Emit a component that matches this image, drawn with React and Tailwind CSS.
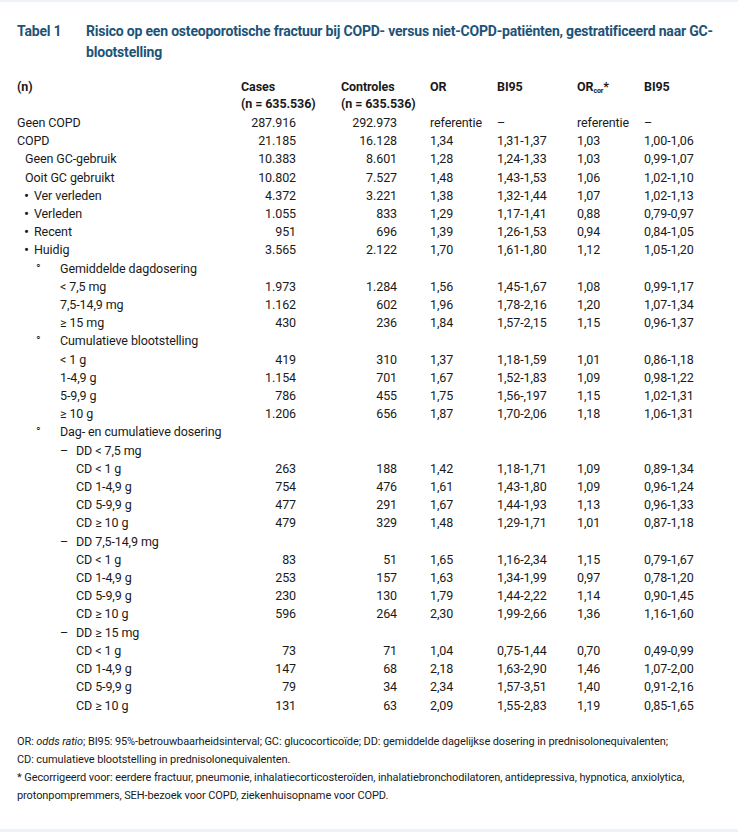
const rows = [
  { k: 'l0', t: 'Geen COPD', v: ['287.916', '292.973', 'referentie', '–', 'referentie', '–'] },
  { k: 'l0', t: 'COPD', v: ['21.185', '16.128', '1,34', '1,31-1,37', '1,03', '1,00-1,06'] },
  { k: 'l1', t: 'Geen GC-gebruik', v: ['10.383', '8.601', '1,28', '1,24-1,33', '1,03', '0,99-1,07'] },
  { k: 'l1', t: 'Ooit GC gebruikt', v: ['10.802', '7.527', '1,48', '1,43-1,53', '1,06', '1,02-1,10'] },
  { k: 'bullet', t: 'Ver verleden', v: ['4.372', '3.221', '1,38', '1,32-1,44', '1,07', '1,02-1,13'] },
  { k: 'bullet', t: 'Verleden', v: ['1.055', '833', '1,29', '1,17-1,41', '0,88', '0,79-0,97'] },
  { k: 'bullet', t: 'Recent', v: ['951', '696', '1,39', '1,26-1,53', '0,94', '0,84-1,05'] },
  { k: 'bullet', t: 'Huidig', v: ['3.565', '2.122', '1,70', '1,61-1,80', '1,12', '1,05-1,20'] },
  { k: 'deg', t: 'Gemiddelde dagdosering' },
  { k: 'l3', t: '< 7,5 mg', v: ['1.973', '1.284', '1,56', '1,45-1,67', '1,08', '0,99-1,17'] },
  { k: 'l3', t: '7,5-14,9 mg', v: ['1.162', '602', '1,96', '1,78-2,16', '1,20', '1,07-1,34'] },
  { k: 'l3', t: '≥ 15 mg', v: ['430', '236', '1,84', '1,57-2,15', '1,15', '0,96-1,37'] },
  { k: 'deg', t: 'Cumulatieve blootstelling' },
  { k: 'l3', t: '< 1 g', v: ['419', '310', '1,37', '1,18-1,59', '1,01', '0,86-1,18'] },
  { k: 'l3', t: '1-4,9 g', v: ['1.154', '701', '1,67', '1,52-1,83', '1,09', '0,98-1,22'] },
  { k: 'l3', t: '5-9,9 g', v: ['786', '455', '1,75', '1,56-,197', '1,15', '1,02-1,31'] },
  { k: 'l3', t: '≥ 10 g', v: ['1.206', '656', '1,87', '1,70-2,06', '1,18', '1,06-1,31'] },
  { k: 'deg', t: 'Dag- en cumulatieve dosering' },
  { k: 'dash', t: 'DD < 7,5 mg' },
  { k: 'l4', t: 'CD < 1 g', v: ['263', '188', '1,42', '1,18-1,71', '1,09', '0,89-1,34'] },
  { k: 'l4', t: 'CD 1-4,9 g', v: ['754', '476', '1,61', '1,43-1,80', '1,09', '0,96-1,24'] },
  { k: 'l4', t: 'CD 5-9,9 g', v: ['477', '291', '1,67', '1,44-1,93', '1,13', '0,96-1,33'] },
  { k: 'l4', t: 'CD ≥ 10 g', v: ['479', '329', '1,48', '1,29-1,71', '1,01', '0,87-1,18'] },
  { k: 'dash', t: 'DD 7,5-14,9 mg' },
  { k: 'l4', t: 'CD < 1 g', v: ['83', '51', '1,65', '1,16-2,34', '1,15', '0,79-1,67'] },
  { k: 'l4', t: 'CD 1-4,9 g', v: ['253', '157', '1,63', '1,34-1,99', '0,97', '0,78-1,20'] },
  { k: 'l4', t: 'CD 5-9,9 g', v: ['230', '130', '1,79', '1,44-2,22', '1,14', '0,90-1,45'] },
  { k: 'l4', t: 'CD ≥ 10 g', v: ['596', '264', '2,30', '1,99-2,66', '1,36', '1,16-1,60'] },
  { k: 'dash', t: 'DD ≥ 15 mg' },
  { k: 'l4', t: 'CD < 1 g', v: ['73', '71', '1,04', '0,75-1,44', '0,70', '0,49-0,99'] },
  { k: 'l4', t: 'CD 1-4,9 g', v: ['147', '68', '2,18', '1,63-2,90', '1,46', '1,07-2,00'] },
  { k: 'l4', t: 'CD 5-9,9 g', v: ['79', '34', '2,34', '1,57-3,51', '1,40', '0,91-2,16'] },
  { k: 'l4', t: 'CD ≥ 10 g', v: ['131', '63', '2,09', '1,55-2,83', '1,19', '0,85-1,65'] },
];

const grid = 'grid grid-cols-[224px_100px_89px_67px_80px_67px_1fr]';

const Label = ({ k, t }) => {
  if (k === 'l1') return <span className="pl-[8px]">{t}</span>;
  if (k === 'bullet')
    return (
      <span className="flex pl-[7px]">
        <span className="w-[10px] text-[15px]">•</span>
        {t}
      </span>
    );
  if (k === 'deg')
    return (
      <span className="flex pl-[19px]">
        <span className="w-[24px]">°</span>
        {t}
      </span>
    );
  if (k === 'l3') return <span className="pl-[43px]">{t}</span>;
  if (k === 'dash')
    return (
      <span className="flex pl-[43px]">
        <span className="w-[16px]">–</span>
        {t}
      </span>
    );
  if (k === 'l4') return <span className="pl-[59px]">{t}</span>;
  return <span>{t}</span>;
};

export default function App() {
  return (
    <div className="h-[832px] bg-white border-t-2 border-b-[3px] border-[#edf2f8] text-[#1a1a1a] font-['Roboto',sans-serif] overflow-hidden">
      <div className="flex px-[17px] pt-[19px] text-[14px] font-bold leading-[21px] text-[#1c5378] tracking-[-0.2px]">
        <div className="w-[69px] shrink-0">Tabel 1</div>
        <div>
          Risico op een osteoporotische fractuur bij COPD- versus niet-COPD-patiënten, gestratificeerd naar GC-
          <br />
          blootstelling
        </div>
      </div>

      <div className="px-[17px] pt-[15px] text-[12.5px] tracking-[-0.1px]">
        <div className={`${grid} font-bold leading-[17px]`}>
          <div>(n)</div>
          <div className="whitespace-nowrap">
            Cases
            <br />
            (n = 635.536)
          </div>
          <div className="whitespace-nowrap">
            Controles
            <br />
            (n = 635.536)
          </div>
          <div>OR</div>
          <div>BI95</div>
          <div>
            OR<sub className="text-[7px] font-bold">cor</sub>*
          </div>
          <div>BI95</div>
        </div>
        <div className="pt-[2px] leading-[18.2px]">
          {rows.map((r, i) => (
            <div key={i} className={grid}>
              <Label k={r.k} t={r.t} />
              {r.v && (
                <>
                  <div className="text-right pr-[45px]">{r.v[0]}</div>
                  <div className="text-right pr-[33px]">{r.v[1]}</div>
                  <div>{r.v[2]}</div>
                  <div>{r.v[3]}</div>
                  <div>{r.v[4]}</div>
                  <div>{r.v[5]}</div>
                </>
              )}
            </div>
          ))}
        </div>
      </div>

      <div className="px-[17px] pt-[18px] text-[11px] leading-[18px] font-['Liberation_Sans_Narrow','Roboto',sans-serif] tracking-[-0.1px]">
        <p>
          OR: <i>odds ratio</i>; BI95: 95%-betrouwbaarheidsinterval; GC: glucocorticoïde; DD: gemiddelde dagelijkse dosering in prednisolonequivalenten;
        </p>
        <p>CD: cumulatieve blootstelling in prednisolonequivalenten.</p>
        <p>
          * Gecorrigeerd voor: eerdere fractuur, pneumonie, inhalatiecorticosteroïden, inhalatiebronchodilatoren, antidepressiva, hypnotica, anxiolytica,
        </p>
        <p>protonpompremmers, SEH-bezoek voor COPD, ziekenhuisopname voor COPD.</p>
      </div>
    </div>
  );
}
